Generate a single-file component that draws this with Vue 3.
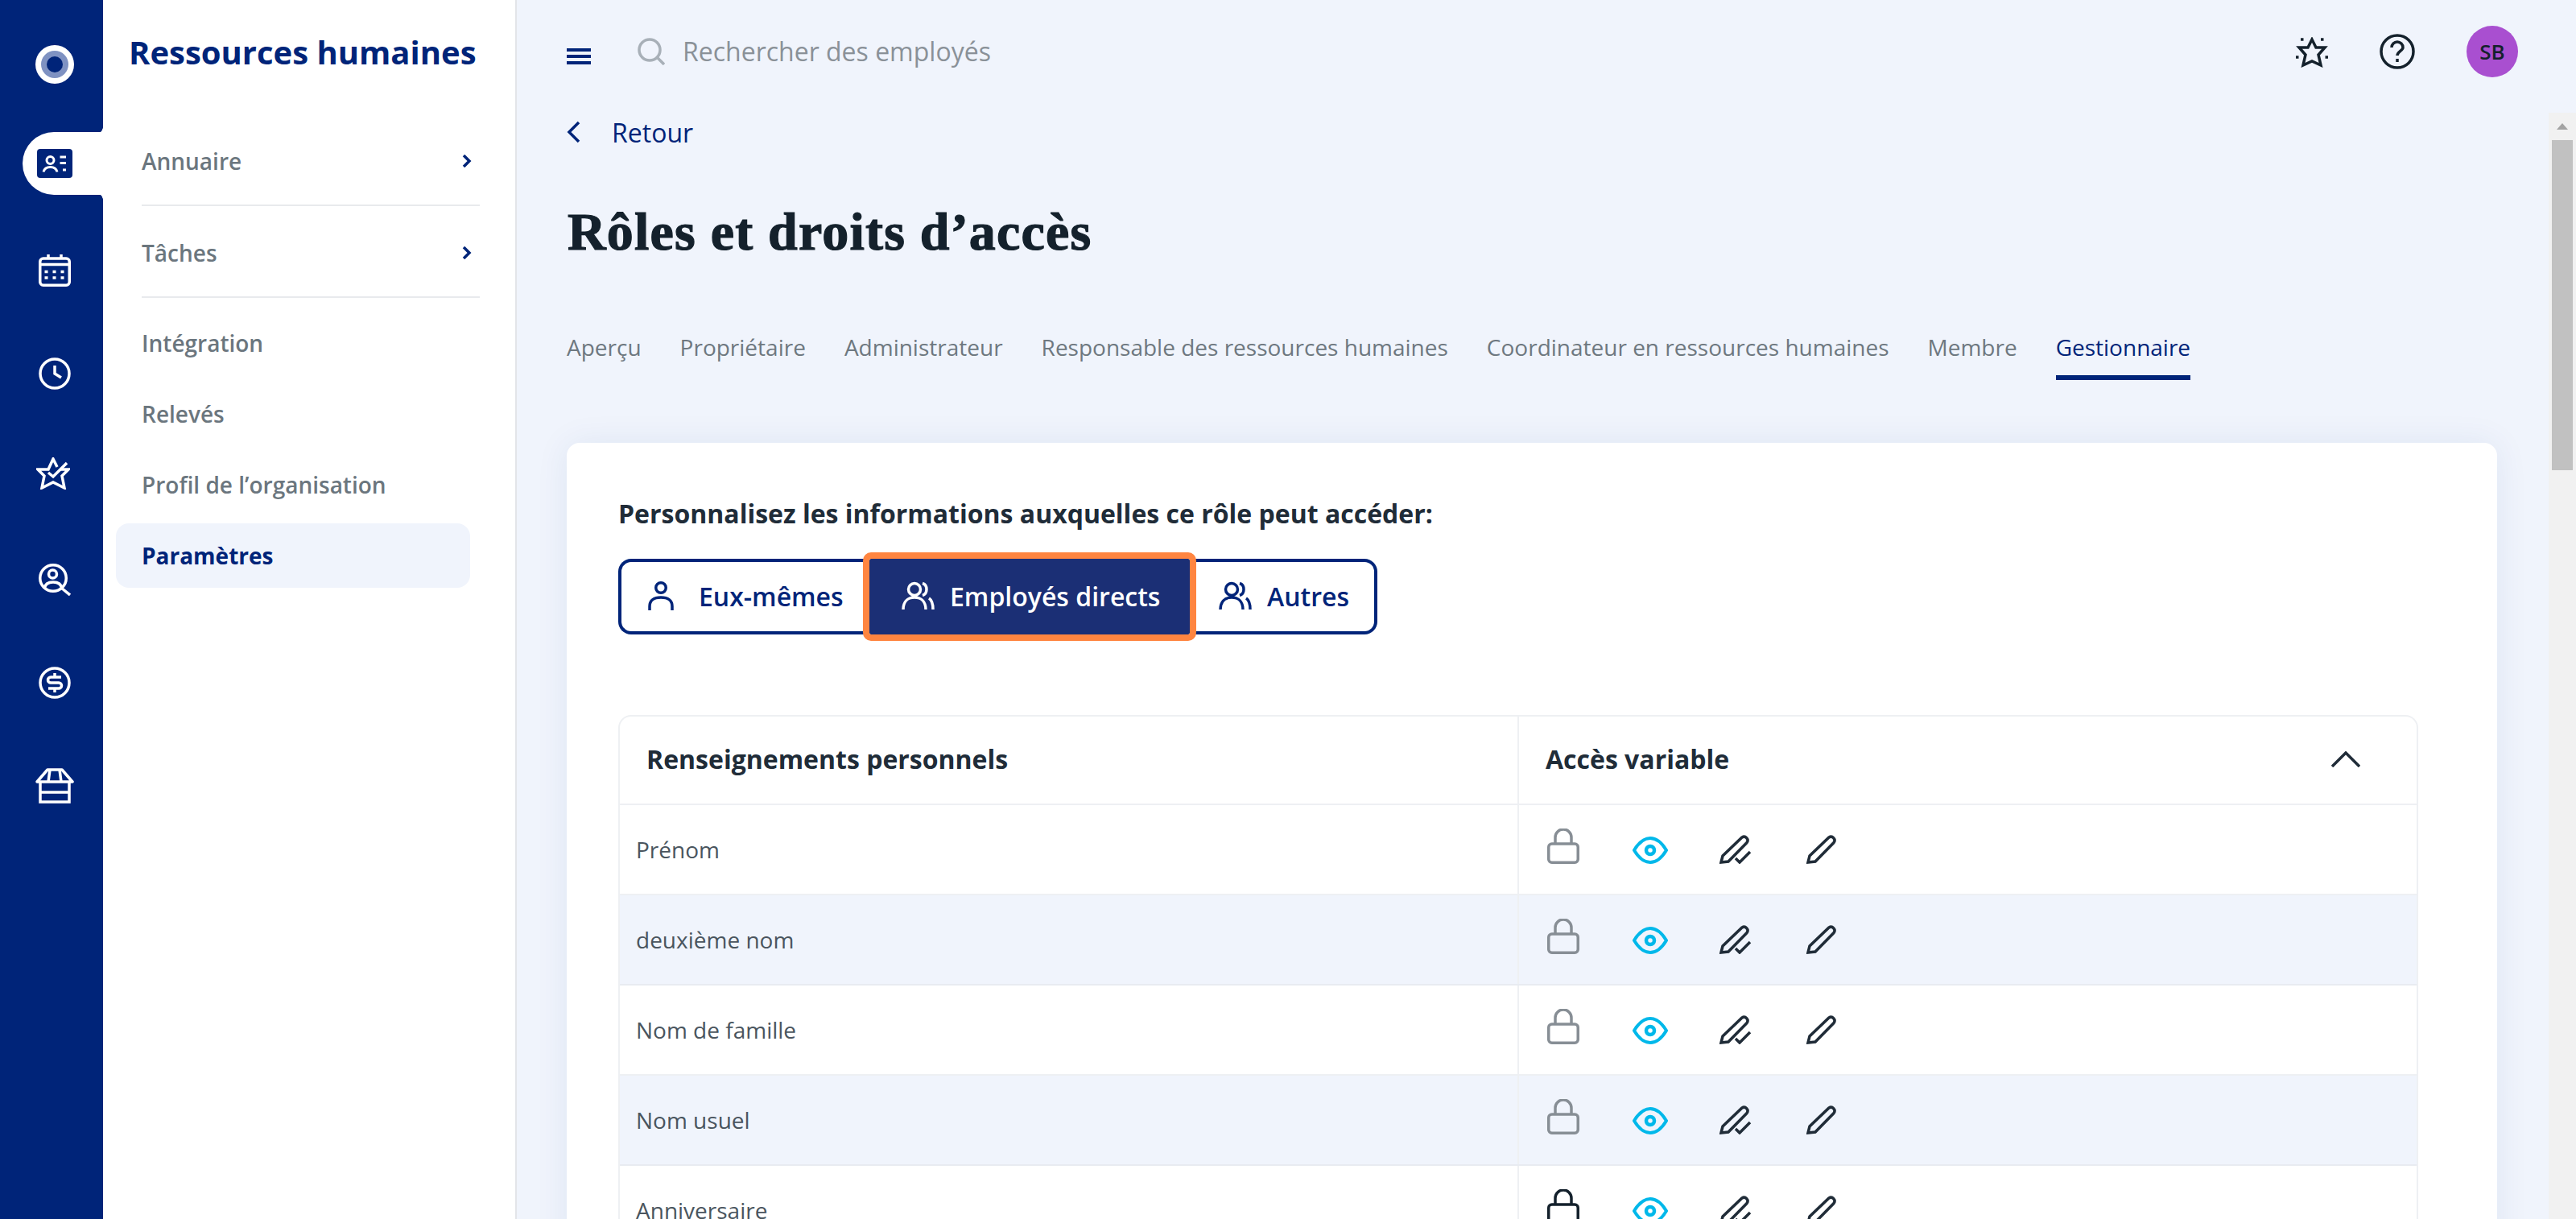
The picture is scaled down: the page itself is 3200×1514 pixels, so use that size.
<script setup>
const navLinks = ['Intégration', 'Relevés', 'Profil de l’organisation']
const tabs = ['Aperçu', 'Propriétaire', 'Administrateur', 'Responsable des ressources humaines', 'Coordinateur en ressources humaines', 'Membre', 'Gestionnaire']
const rows = [
  { name: 'Prénom', locked: false },
  { name: 'deuxième nom', locked: false },
  { name: 'Nom de famille', locked: false },
  { name: 'Nom usuel', locked: false },
  { name: 'Anniversaire', locked: true },
]
</script>

<template>
  <div class="app">
    <aside class="rail">
      <div class="rail-logo">
        <svg width="48" height="48" viewBox="0 0 48 48"><circle cx="24" cy="24" r="24" fill="#fff" /><circle cx="24" cy="24" r="17" fill="#7f92c2" /><circle cx="24" cy="24" r="10" fill="#002479" /></svg>
      </div>
      <div class="rail-active">
        <svg width="44" height="36" viewBox="0 0 44 36"><rect width="44" height="36" rx="4" fill="#002479" /><circle cx="16.500" cy="14" r="4.500" fill="none" stroke="#fff" stroke-width="3" /><path d="M8 28.500c1-4 4-6 8.500-6s7.500 2 8.500 6" fill="none" stroke="#fff" stroke-width="3" /><path d="M28.500 10H36M28.500 17.500H36M32 26h4" stroke="#fff" stroke-width="3" /></svg>
      </div>
      <svg class="rail-icon cal" width="40" height="40" viewBox="0 0 40 40" fill="none" stroke="#fff" stroke-width="3.500"><rect x="1.750" y="5" width="36.500" height="33.250" rx="4" /><path d="M1.750 12.500h36.500M12 0v6M28 0v6" /><path d="M7.500 21.500h4M17.500 21.500h4M27.500 21.500h4M7.500 29h4M17.500 29h4M27.500 29h4" /></svg>
      <svg class="rail-icon clock" width="40" height="40" viewBox="0 0 40 40" fill="none" stroke="#fff" stroke-width="3.500"><circle cx="20" cy="20" r="18" /><path d="M20 10v10l8 5" /></svg>
      <svg class="rail-icon star" width="42" height="40" viewBox="0 0 42 40" fill="none" stroke="#fff" stroke-width="3.500"><path d="M30 15h10l-8 8 3 15-14-7-14 7 3-15-8-8h13l6-13 5 10" /><path d="M15 19l6 5L38 7" /></svg>
      <svg class="rail-icon people" width="40" height="40" viewBox="0 0 40 40" fill="none" stroke="#fff" stroke-width="3.500"><circle cx="18" cy="18" r="16.250" /><circle cx="17.500" cy="13" r="5" /><path d="M7 31c1-6 5-8 11-8s10 2 11 8" /><path d="M28 30l11 9" /></svg>
      <svg class="rail-icon dollar" width="40" height="40" viewBox="0 0 40 40" fill="none" stroke="#fff" stroke-width="3.500"><circle cx="20" cy="20" r="18" /><path d="M28 13H15a3.500 3.500 0 000 7h10a3.500 3.500 0 010 7H12M20 8v5M20 27v5" /></svg>
      <svg class="rail-icon store" width="48" height="44" viewBox="0 0 48 44" fill="none" stroke="#fff" stroke-width="3.500"><path d="M15 2h18l13 15H2z" stroke-linejoin="round" /><path d="M18 2l-2 15M30 2l2 15" /><path d="M6 17v25h36V17M6 30h36" /></svg>
    </aside>

    <nav class="sidebar">
      <h2 class="side-title">Ressources humaines</h2>
      <div class="side-group">
        <span>Annuaire</span>
        <svg width="12" height="16" viewBox="0 0 12 16" fill="none" stroke="#002479" stroke-width="3.500"><path d="M2 1l7 7-7 7" /></svg>
      </div>
      <div class="side-group">
        <span>Tâches</span>
        <svg width="12" height="16" viewBox="0 0 12 16" fill="none" stroke="#002479" stroke-width="3.500"><path d="M2 1l7 7-7 7" /></svg>
      </div>
      <a v-for="link in navLinks" :key="link" class="side-link">{{ link }}</a>
      <a class="side-link current">Paramètres</a>
    </nav>

    <div class="main">
      <header class="topbar">
        <div class="burger"><span></span><span></span><span></span></div>
        <svg class="search-icon" width="34" height="34" viewBox="0 0 34 34" fill="none" stroke="#a8b0b8" stroke-width="3.500"><circle cx="15" cy="15" r="13" /><path d="M25 25l8 8" /></svg>
        <span class="search-text">Rechercher des employés</span>
        <svg class="top-star" width="40" height="38" viewBox="0 0 40 38" fill="none" stroke="#14212c" stroke-width="3.500"><path d="M20 3l5 10h11l-8 9 3 13-11-5-11 5 3-13-8-9h11z" /><path d="M6 3h3.500M31 3h3.500M0 25h3.500M36.500 25H40" /></svg>
        <svg class="top-help" width="44" height="44" viewBox="0 0 44 44" fill="none" stroke="#14212c" stroke-width="3.500"><circle cx="22" cy="22" r="20" /><path d="M15 17a7 7 0 1114 0c0 4-7 5-7 10" /><path d="M22 31v4" /></svg>
        <div class="avatar">SB</div>
      </header>

      <div class="page">
        <div class="content">
          <a class="back">
            <svg width="18" height="28" viewBox="0 0 18 28" fill="none" stroke="#002479" stroke-width="3.500"><path d="M15 2L3 14l12 12" /></svg>
            Retour
          </a>
          <h1 class="page-title">Rôles et droits d’accès</h1>
          <div class="tabs">
            <a v-for="tab in tabs" :key="tab" class="tab" :class="{ active: tab === 'Gestionnaire' }">{{ tab }}</a>
          </div>

          <section class="card">
            <p class="lead">Personnalisez les informations auxquelles ce rôle peut accéder:</p>
            <div class="seg">
              <button class="seg-btn first">
                <svg width="32" height="36" viewBox="0 0 32 36" fill="none" stroke="#002479" stroke-width="3.500"><circle cx="16" cy="8" r="6.250" /><path d="M2 36v-5c0-7 5-11 14-11s14 4 14 11v5" /></svg>
                Eux-mêmes
              </button>
              <button class="seg-btn on">
                <svg width="41" height="36" viewBox="0 0 41 36" fill="none" stroke="#fff" stroke-width="3.500"><circle cx="16" cy="10" r="7.500" /><path d="M26 2.500c3 1 5 4 5 7.500s-2 6.500-5 7.500M2 35c0-9 5-15 14-15s14 6 14 15M34 21c3 2 5 7 5 14" /></svg>
                Employés directs
              </button>
              <button class="seg-btn last">
                <svg width="41" height="36" viewBox="0 0 41 36" fill="none" stroke="#002479" stroke-width="3.500"><circle cx="16" cy="10" r="7.500" /><path d="M26 2.500c3 1 5 4 5 7.500s-2 6.500-5 7.500M2 35c0-9 5-15 14-15s14 6 14 15M34 21c3 2 5 7 5 14" /></svg>
                Autres
              </button>
            </div>

            <div class="table">
              <div class="row head">
                <div class="cell-name">Renseignements personnels</div>
                <div class="cell-access">
                  Accès variable
                  <svg class="collapse" width="36" height="20" viewBox="0 0 36 20" fill="none" stroke="#202c38" stroke-width="3.500"><path d="M1 19L18 2l17 17" /></svg>
                </div>
              </div>
              <div v-for="row in rows" :key="row.name" class="row">
                <div class="cell-name">{{ row.name }}</div>
                <div class="cell-access">
                  <svg class="ic-lock" width="40" height="44" viewBox="0 0 40 44" fill="none" :stroke="row.locked ? '#14212c' : '#878e95'" stroke-width="3.500"><rect x="1.750" y="19" width="36.500" height="23.250" rx="4" /><path d="M10 19V11a10 10 0 0120 0v8" /></svg>
                  <svg class="ic-eye" width="44" height="34" viewBox="0 0 44 34" fill="none" stroke="#00b8ea" stroke-width="4"><path d="M2 17C8 7 15 2 22 2s14 5 20 15c-6 10-13 15-20 15S8 27 2 17z" /><circle cx="22" cy="17" r="5" stroke-width="4.500" /></svg>
                  <svg class="ic-pen" width="40" height="38" viewBox="0 0 40 38" fill="none" stroke="#202c38" stroke-width="3.500"><path d="M2 36l2-8L28 5a4.500 4.500 0 016 6.500L11 35z" /><path d="M20 31l5 5 13-13" /></svg>
                  <svg class="ic-pen2" width="38" height="38" viewBox="0 0 38 38" fill="none" stroke="#202c38" stroke-width="3.500"><path d="M2 36l2-8L28 5a4.500 4.500 0 016 6.500L11 35z" /></svg>
                </div>
              </div>
            </div>
          </section>
        </div>
        <div class="scrollbar">
          <span class="arrow"></span>
          <div class="thumb"></div>
        </div>
      </div>
    </div>
  </div>
</template>

<style>
html, body { margin: 0; background: #f0f4fc; }
</style>

<style scoped>
.app {
  display: flex;
  height: 1514px;
  overflow: hidden;
  font-family: "Open Sans", "Noto Sans", sans-serif;
  color: #14212c;
}

.rail {
  width: 128px;
  flex: none;
  background: #002479;
  display: flex;
  flex-direction: column;
  align-items: center;
  padding: 56px 0 0 8px;
  box-sizing: border-box;
}
.rail-logo { height: 48px; }
.rail-active {
  position: relative;
  align-self: flex-end;
  width: 100px;
  height: 78px;
  margin-top: 60px;
  background: #fff;
  border-radius: 39px 0 0 39px;
  display: flex;
  align-items: center;
  padding-left: 18px;
  box-sizing: border-box;
}
.rail-active::before,
.rail-active::after {
  content: "";
  position: absolute;
  right: 0;
  width: 8px;
  height: 6px;
}
.rail-active::before {
  top: -6px;
  background: radial-gradient(circle at 0 0, #002479 7.500px, #fff 8px);
}
.rail-active::after {
  bottom: -6px;
  background: radial-gradient(circle at 0 100%, #002479 7.500px, #fff 8px);
}
.rail-icon { display: block; flex: none; }
.cal { margin-top: 74px; }
.clock { margin-top: 88px; }
.star { margin-top: 84px; margin-left: -4px; }
.people { margin-top: 92px; }
.dollar { margin-top: 88px; }
.store { margin-top: 86px; }

.sidebar {
  width: 514px;
  flex: none;
  box-sizing: border-box;
  background: #fff;
  border-right: 2px solid #e3e5e9;
  padding: 38px 44px 0 32px;
}
.side-title {
  margin: 0 0 50px;
  font-size: 40px;
  line-height: 54px;
  font-weight: 700;
  color: #002479;
  white-space: nowrap;
}
.side-group {
  margin-left: 16px;
  height: 114px;
  box-sizing: border-box;
  display: flex;
  align-items: center;
  justify-content: space-between;
  padding: 4px 10px 0 0;
  border-bottom: 2px solid #e8eaed;
  font-size: 28px;
  font-weight: 600;
  color: #6b767e;
}
.side-group + .side-link { margin-top: 16px; }
.side-link {
  display: flex;
  align-items: center;
  height: 80px;
  margin-top: 8px;
  margin-left: -16px;
  padding-left: 32px;
  margin-right: 12px;
  border-radius: 16px;
  font-size: 28px;
  font-weight: 600;
  color: #6b767e;
}
.current {
  background: #f0f4fc;
  color: #002479;
  font-weight: 700;
}

.main {
  flex: 1;
  min-width: 0;
  display: flex;
  flex-direction: column;
  background: #f0f4fc;
}
.topbar {
  height: 140px;
  flex: none;
  box-sizing: border-box;
  display: flex;
  align-items: flex-start;
  padding: 32px 72px 0 62px;
}
.burger {
  width: 30px;
  margin-top: 28px;
  display: flex;
  flex-direction: column;
  gap: 4px;
}
.burger span { height: 4px; background: #002479; }
.search-icon { margin: 15px 0 0 58px; }
.search-text {
  margin: 8px 0 0 22px;
  font-size: 32px;
  line-height: 48px;
  color: #8a9198;
}
.top-star { margin: 14px 0 0 auto; }
.top-help { margin: 10px 0 0 64px; }
.avatar {
  width: 64px;
  height: 64px;
  margin-left: 64px;
  border-radius: 50%;
  background: #a94fd0;
  display: flex;
  align-items: center;
  justify-content: center;
  font-size: 26px;
  font-weight: 600;
  color: #14212c;
}

.page {
  flex: 1;
  min-height: 0;
  display: flex;
}
.content {
  flex: 1;
  min-width: 0;
  padding: 0 64px 0 62px;
}
.back {
  display: flex;
  align-items: center;
  gap: 38px;
  height: 48px;
  font-size: 32px;
  color: #002479;
}
.page-title {
  margin: 60px 0 0 1px;
  font-family: "Liberation Serif", serif;
  font-size: 66px;
  line-height: 80px;
  font-weight: 700;
  letter-spacing: 1.200px;
  -webkit-text-stroke: 1.200px #14212c;
  color: #14212c;
}
.tabs {
  display: flex;
  gap: 48px;
  margin-top: 76px;
}
.tab {
  padding: 8px 0 16px;
  font-size: 28px;
  line-height: 38px;
  color: #6e7880;
  border-bottom: 6px solid transparent;
}
.tab.active {
  color: #002479;
  border-bottom-color: #002479;
}

.card {
  margin-top: 78px;
  padding: 64px 98px 0 64px;
  background: #fff;
  border-radius: 16px;
  box-shadow: 0 0 40px rgba(30, 60, 140, 0.08);
}
.lead {
  margin: 0;
  font-size: 32px;
  line-height: 48px;
  font-weight: 700;
  color: #202c38;
}
.seg {
  display: flex;
  margin-top: 32px;
}
.seg-btn {
  display: flex;
  align-items: center;
  height: 94px;
  box-sizing: border-box;
  border: 4px solid #002479;
  padding-bottom: 3px;
  background: #fff;
  color: #002479;
  font-family: inherit;
  font-size: 32px;
  font-weight: 600;
  white-space: nowrap;
}
.seg-btn.first {
  width: 312px;
  gap: 31px;
  padding-left: 33px;
  border-right: none;
  border-radius: 16px 0 0 16px;
}
.seg-btn.on {
  width: 398px;
  gap: 19px;
  padding-left: 36px;
  background: #1b2f75;
  border-color: #1b2f75;
  color: #fff;
  outline: 8px solid #ff8540;
  border-radius: 2px;
  position: relative;
}
.seg-btn.last {
  width: 233px;
  gap: 19px;
  padding-left: 36px;
  border-left: none;
  border-radius: 0 16px 16px 0;
}

.table {
  margin-top: 100px;
  border: 2px solid #eef0f3;
  border-bottom: none;
  border-radius: 16px 16px 0 0;
  overflow: hidden;
}
.row {
  display: flex;
  height: 110px;
  border-bottom: 2px solid #eef0f3;
}
.row:nth-child(odd):not(.head) { background: #f0f4fc; border-bottom-color: #e8ebf1; }
.head { height: 108px; }
.cell-name {
  width: 1117px;
  flex: none;
  box-sizing: border-box;
  display: flex;
  align-items: center;
  padding-left: 20px;
  border-right: 2px solid #eef0f3;
  font-size: 28px;
  color: #4a555e;
}
.cell-access {
  flex: 1;
  display: flex;
  align-items: flex-start;
  padding-left: 35px;
}
.head .cell-name {
  padding: 0 0 3px 33px;
  font-size: 32px;
  font-weight: 700;
  color: #202c38;
}
.head .cell-access {
  align-items: center;
  padding: 0 0 3px 33px;
  font-size: 32px;
  font-weight: 700;
  color: #202c38;
}
.collapse { margin-left: auto; margin-right: 70px; }
.ic-lock { margin-top: 29px; }
.ic-eye { margin: 39px 0 0 66px; }
.ic-pen { margin: 35px 0 0 64px; }
.ic-pen2 { margin: 35px 0 0 68px; }

.scrollbar {
  width: 34px;
  flex: none;
  background: #f1f1f1;
  display: flex;
  flex-direction: column;
  align-items: center;
}
.arrow {
  margin-top: 13px;
  border-left: 7px solid transparent;
  border-right: 7px solid transparent;
  border-bottom: 8px solid #a3a3a3;
}
.thumb {
  width: 26px;
  height: 410px;
  margin-top: 13px;
  background: #c1c1c1;
}
</style>
